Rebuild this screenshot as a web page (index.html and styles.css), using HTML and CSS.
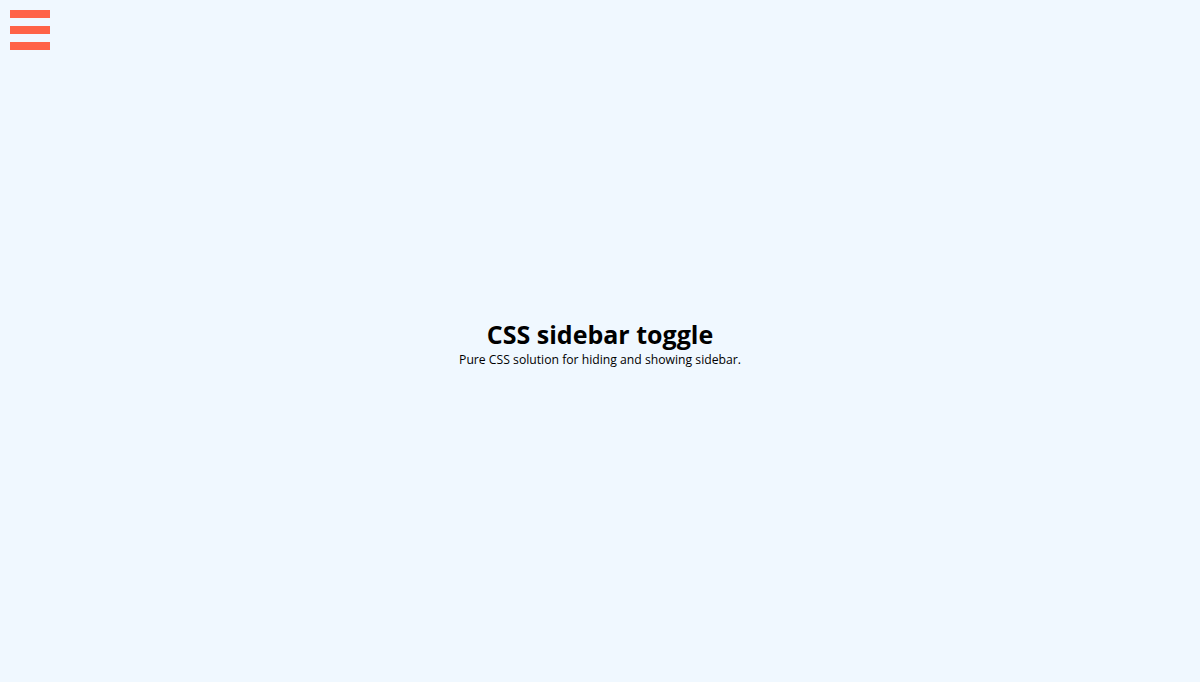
FILE: index.html
```html
<!DOCTYPE html>
<html>
<head>
<meta charset="utf-8">
<link rel="stylesheet" href="styles.css">
</head>
<body>
<label class="toggle" aria-label="Toggle sidebar">
  <span class="bar"></span>
  <span class="bar"></span>
  <span class="bar"></span>
</label>
<main class="content">
  <h1 class="title">CSS sidebar toggle</h1>
  <p class="subtitle">Pure CSS solution for hiding and showing sidebar.</p>
</main>
</body>
</html>
```
FILE: styles.css
```css
html, body {
  margin: 0;
  padding: 0;
  height: 100%;
}
body {
  background: #f0f8ff;
  font-family: "Open Sans", "Noto Sans", sans-serif;
  color: #000;
}
.toggle {
  position: absolute;
  top: 10px;
  left: 10px;
  display: flex;
  flex-direction: column;
  gap: 8px;
  width: 40px;
  cursor: pointer;
}
.bar {
  display: block;
  height: 8px;
  background: #ff6347;
}
.content {
  box-sizing: border-box;
  height: 100%;
  padding-top: 2px;
  display: flex;
  flex-direction: column;
  align-items: center;
  justify-content: center;
  text-align: center;
}
.title {
  margin: 0;
  font-size: 25px;
  font-weight: 700;
  line-height: 34px;
}
.subtitle {
  margin: 0;
  font-size: 12.2px;
  line-height: 17px;
}
```
